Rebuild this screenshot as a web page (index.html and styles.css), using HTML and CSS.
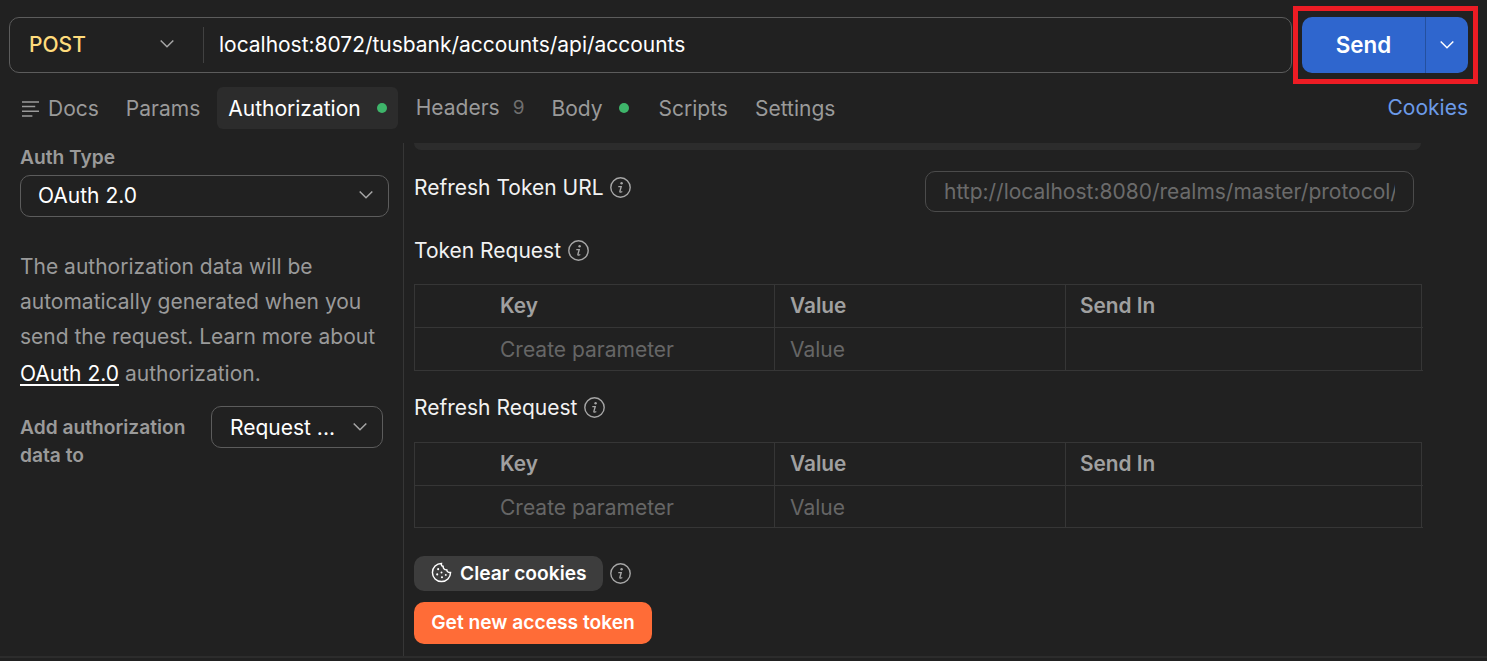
FILE: index.html
```html
<!DOCTYPE html>
<html lang="en">
<head>
<meta charset="utf-8">
<title>POST accounts</title>
<link rel="stylesheet" href="styles.css">
</head>
<body>
<svg class="defs" width="0" height="0" aria-hidden="true">
  <symbol id="chev" viewBox="0 0 20 20"><path d="M3.700 6.500 10 12.700 16.300 6.500" fill="none" stroke="currentColor" stroke-width="1.500"/></symbol>
  <symbol id="info" viewBox="0 0 21 21"><circle cx="10.500" cy="10.500" r="9.700" fill="none" stroke="currentColor" stroke-width="1.400"/><circle cx="11.600" cy="6.200" r="1.200" fill="currentColor"/><path d="M8.300 9.600h2.900l-1.300 4.700c-.2.900.8 1.200 2.400.2" fill="none" stroke="currentColor" stroke-width="1.400"/></symbol>
</svg>
<div class="request-row">
  <div class="url-bar">
    <div class="method"><span class="method-name">POST</span><svg class="chev"><use href="#chev"/></svg></div>
    <div class="url">localhost:8072/tusbank/accounts/api/accounts</div>
  </div>
  <div class="send-btn"><span class="send-label">Send</span><span class="send-more"><svg class="chev"><use href="#chev"/></svg></span></div>
  <div class="highlight"></div>
</div>
<div class="tabs">
  <div class="tab docs"><svg class="docs-icon" viewBox="0 0 20 18"><path d="M1 2h18M1 7h14M1 12h18M1 17h11" fill="none" stroke="currentColor" stroke-width="1.600"/></svg>Docs</div>
  <div class="tab">Params</div>
  <div class="tab active">Authorization<span class="dot"></span></div>
  <div class="tab headers">Headers<span class="count">9</span></div>
  <div class="tab body-tab">Body<span class="dot"></span></div>
  <div class="tab scripts">Scripts</div>
  <div class="tab">Settings</div>
  <div class="cookies">Cookies</div>
</div>
<main class="content">
  <aside class="side">
    <div class="side-label">Auth Type</div>
    <div class="select auth-select"><span>OAuth 2.0</span><svg class="chev"><use href="#chev"/></svg></div>
    <p class="side-text">The authorization data will be automatically generated when you send the request. Learn more about <a class="link">OAuth 2.0</a> authorization.</p>
    <div class="add-row">
      <div class="side-label add-label">Add authorization data to</div>
      <div class="select add-select"><span>Request ...</span><svg class="chev"><use href="#chev"/></svg></div>
    </div>
  </aside>
  <section class="pane">
    <div class="pane-edge"></div>
    <div class="field-row">
      <div class="title"><span>Refresh Token URL</span><svg class="info"><use href="#info"/></svg></div>
      <div class="input"><div class="input-text">http://localhost:8080/realms/master/protocol/</div></div>
    </div>
    <div class="title token-title"><span>Token Request</span><svg class="info"><use href="#info"/></svg></div>
    <div class="table">
      <div class="cell head key">Key</div><div class="cell head">Value</div><div class="cell head last">Send In</div>
      <div class="cell ph key">Create parameter</div><div class="cell ph">Value</div><div class="cell last"></div>
    </div>
    <div class="title refresh-title"><span>Refresh Request</span><svg class="info"><use href="#info"/></svg></div>
    <div class="table second">
      <div class="cell head key">Key</div><div class="cell head">Value</div><div class="cell head last">Send In</div>
      <div class="cell ph key">Create parameter</div><div class="cell ph">Value</div><div class="cell last"></div>
    </div>
    <div class="clear-row">
      <div class="clear-btn">
        <svg class="cookie" viewBox="0 0 22 22"><path d="M11 1.500a9.500 9.500 0 1 0 9.500 9.500c-2.200.4-3.800-.8-4-2.800-2.200.2-4-1.400-3.800-3.700C11 4.300 10.600 3 11 1.500Z" fill="none" stroke="currentColor" stroke-width="1.500"/><circle cx="7.500" cy="7.500" r="1.100" fill="currentColor"/><circle cx="6.500" cy="13" r="1.100" fill="currentColor"/><circle cx="11" cy="11" r="1" fill="currentColor"/><circle cx="11.500" cy="16" r="1.100" fill="currentColor"/><circle cx="15.500" cy="13.500" r="1" fill="currentColor"/></svg>
        Clear cookies
      </div>
      <svg class="info"><use href="#info"/></svg>
    </div>
    <div class="token-btn">Get new access token</div>
  </section>
</main>
</body>
</html>
```

FILE: styles.css
```css
* { box-sizing: border-box; }
html, body { margin: 0; height: 661px; overflow: hidden; }
body { background: #212121; color: #fff; font-family: Inter, "Liberation Sans", sans-serif; font-size: 21px; display: flex; flex-direction: column; }
.defs { position: absolute; }
.chev { width: 20px; height: 20px; color: #a6a6a6; flex: none; }

.request-row { display: flex; gap: 10px; padding: 17px 19px 0 9px; position: relative; height: 73px; }
.url-bar { flex: 1; height: 56px; border: 1px solid #5c5c5c; border-radius: 10px; display: flex; align-items: center; }
.method { width: 194px; height: 36px; display: flex; align-items: center; justify-content: space-between; padding: 0 26px 2px 19px; border-right: 1px solid #414141; }
.method-name { color: #ffdc7c; font-weight: 500; }
.url { padding: 0 0 2px 15px; font-size: 20.960px; }
.send-btn { width: 166px; height: 56px; background: #2f66ce; border-radius: 10px; display: flex; align-items: center; font-weight: 600; font-size: 22.400px; }
.send-label { width: 124px; text-align: center; height: 100%; line-height: 56px; border-right: 1px solid #24509f; }
.send-more { flex: 1; display: flex; justify-content: center; }
.send-more .chev { color: #fff; }
.highlight { position: absolute; left: 1293px; top: 6px; width: 185px; height: 78px; border: 5px solid #ed1c24; }

.tabs { display: flex; align-items: center; height: 42px; margin-top: 14px; padding: 0 19px 0 21px; color: #9a9a9a; }
.tab { height: 42px; display: flex; align-items: center; padding: 0 11px; margin-right: 6px; border-radius: 6px; }
.tab.docs { padding: 0; margin-right: 16px; }
.docs-icon { width: 19px; height: 17px; margin-right: 8px; }
.tab.active { background: #2c2c2c; color: #fff; margin: 0 7px 0 0; }
.dot { width: 10px; height: 10px; border-radius: 50%; background: #3eb56a; margin-left: 16px; }
.count { color: #6f6f6f; margin-left: 13px; font-size: 19px; }
.tab.headers { position: relative; bottom: 1px; margin-right: 5px; }
.tab.body-tab { margin-right: 8px; }
.tab.scripts { margin-right: 5px; }
.cookies { margin-left: auto; color: #6c9be8; position: relative; bottom: 1px; }

.content { display: flex; flex: 1; min-height: 0; margin-bottom: 3px; padding-top: 14px; border-bottom: 2px solid #2c2c2c; }
.side { width: 404px; flex: none; border-right: 1px solid #363636; padding: 0 14px 0 20px; }
.side-label { font-size: 19.200px; font-weight: 600; color: #9a9a9a; line-height: 28px; }
.select { display: flex; align-items: center; justify-content: space-between; height: 42px; border: 1px solid #5c5c5c; border-radius: 10px; }
.auth-select { width: 369px; margin-top: 4px; padding: 0 12px 2px 17px; }
.side-text { margin: 32px 0 0; width: 365px; color: #9a9a9a; line-height: 35px; }
.link { color: #fff; line-height: 39px; text-decoration: underline; text-underline-offset: 3px; }
.add-row { display: flex; justify-content: space-between; margin-top: 13px; width: 363px; }
.add-label { width: 175px; margin-top: 7px; }
.add-select { width: 172px; padding: 0 12px 0 18px; }

.pane { flex: 1; padding: 0 65px 0 10px; min-width: 0; }
.pane-edge { height: 7px; width: 1007px; background: #2c2c2c; border-radius: 0 0 10px 10px; }
.field-row { display: flex; justify-content: space-between; align-items: flex-start; width: 1000px; margin-top: 22px; }
.field-row .title { gap: 6px; }
.title { display: flex; align-items: center; gap: 7px; line-height: 32px; color: #f2f2f2; }
.title .info { margin-bottom: 2px; }
.info { width: 21px; height: 21px; color: #a6a6a6; flex: none; }
.input { width: 489px; height: 41px; margin-top: -1px; border: 1px solid #4b4b4b; border-radius: 10px; color: #6b6b6b; line-height: 40px; padding: 0 18px; }
.input-text { overflow: hidden; white-space: nowrap; }
.token-title { margin-top: 23px; }
.table { display: grid; grid-template-columns: 360px 291px 357px; width: 1008px; border: 1px solid #363636; border-bottom: 0; margin-top: 17px; }
.table.second { margin-top: 18px; }
.cell { height: 43px; border-right: 1px solid #363636; border-bottom: 1px solid #363636; line-height: 43px; padding-left: 15px; }
.cell.last { border-right: 0; padding-left: 14px; }
.cell.key { padding-left: 85px; }
.second .cell:nth-child(n+4) { height: 42px; }
.head { color: #a0a0a0; font-weight: 600; font-size: 20.800px; line-height: 42px; }
.ph { color: #666; line-height: 44px; }
.refresh-title { margin-top: 21px; }
.clear-row { display: flex; align-items: center; gap: 7px; margin-top: 28px; }
.clear-btn { height: 35px; width: 189px; border-radius: 10px; background: #3d3d3d; display: flex; align-items: center; gap: 8px; padding: 0 0 2px 17px; font-weight: 600; font-size: 19.200px; }
.cookie { width: 21px; height: 21px; }
.token-btn { margin-top: 11px; width: 238px; height: 42px; background: #ff6c37; border-radius: 10px; font-weight: 600; font-size: 19.200px; line-height: 40px; text-align: center; }
```
